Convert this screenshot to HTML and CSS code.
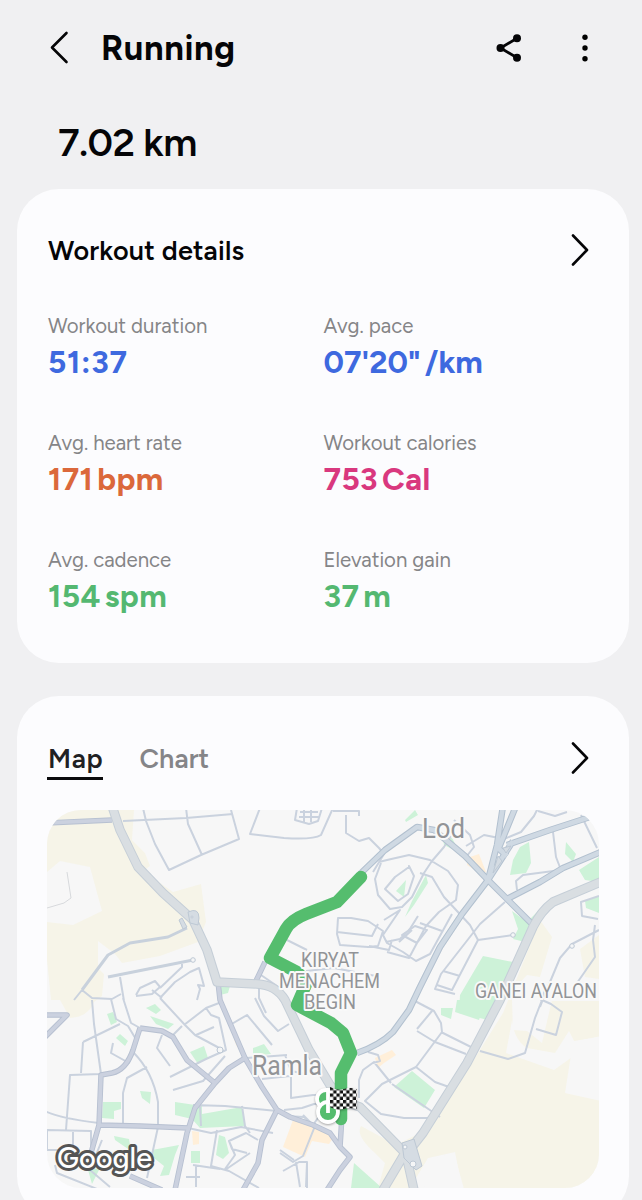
FILE: index.html
```html
<!DOCTYPE html>
<html lang="en">
<head>
<meta charset="utf-8">
<title>Running</title>
<link rel="stylesheet" href="styles.css">
</head>
<body>
<header class="topbar">
  <svg class="back" width="20" height="36" viewBox="0 0 20 36"><path d="M17.500 3 3 17.500l14.500 14.500"/></svg>
  <h1 class="title"><span>Running</span></h1>
  <svg class="share" width="32" height="32" viewBox="0 0 32 32"><path d="M24 6.2 7.5 16 24 25.8"/><circle cx="24" cy="6.2" r="4"/><circle cx="7.5" cy="16" r="4"/><circle cx="24" cy="25.8" r="4"/></svg>
  <svg class="more" width="8" height="32" viewBox="0 0 8 32"><circle cx="4" cy="5.3" r="2.7"/><circle cx="4" cy="16" r="2.7"/><circle cx="4" cy="26.7" r="2.7"/></svg>
</header>
<div class="distance">7.02 km</div>
<main class="cards">
  <section class="card details">
    <div class="card-head">
      <h2>Workout details</h2>
      <svg class="chevron" width="20" height="36" viewBox="0 0 20 36"><path d="m3 3.500 14 14.500L3 32.500"/></svg>
    </div>
    <dl class="stats">
      <div><dt>Workout duration</dt><dd class="blue time">51:37</dd></div>
      <div><dt>Avg. pace</dt><dd class="blue pace">07'20"<span class="unit">/km</span></dd></div>
      <div><dt>Avg. heart rate</dt><dd class="orange">171<span class="unit">bpm</span></dd></div>
      <div><dt>Workout calories</dt><dd class="pink">753<span class="unit">Cal</span></dd></div>
      <div><dt>Avg. cadence</dt><dd class="green">154<span class="unit">spm</span></dd></div>
      <div><dt>Elevation gain</dt><dd class="green">37<span class="unit">m</span></dd></div>
    </dl>
  </section>
  <section class="card map-card">
    <div class="card-head">
      <nav class="tabs"><span class="tab active">Map</span><span class="tab chart">Chart</span></nav>
      <svg class="chevron" width="20" height="36" viewBox="0 0 20 36"><path d="m3 3.500 14 14.500L3 32.500"/></svg>
    </div>
    <svg class="map" width="552" height="378" viewBox="47 810 552 378">
      <defs>
        <g id="highways">
          <path d="M112 806 120 830 138 867 163 893 193 920 207 950 217 982 257 984Q276 985 285 1000L309 1050 330 1085 345 1102 360 1107 405 1153 383 1190M405 1150 414 1190"/>
          <path d="M603 881 553 902Q541 911 533 927L500 1000 467 1063 423 1133 405 1156"/>
        </g>
        <g id="arterials">
          <path d="M503 806 497 845 488 880M516 806 498 850M590 817 550 830 507 845 M513 841 488 880 462 914 440 947 420 987 409 1010 393 1032Q380 1045 357 1053"/>
          <path d="M360 874 385 850 417 827 434 830 465 856 488 880 532 924M603 851 563 868 540 882 507 899M498 848l9 8"/>
        </g>
        <g id="streets">
          <path d="M45 1037 67 1015H45M140 1028 133 1050Q126 1070 112 1073L101 1075 99 1125 91 1153M140 1028 162 1031 173 1037 187 1060 215 1083M245 1058 229 1068 215 1083 195 1108 187 1133 175 1190M99 1125 140 1126 188 1128M218 982 220 1000 245 1058 262 1087 277 1110 290 1117 313 1125 330 1133 340 1147 350 1157 340 1170 327 1190M340 1147 342 1116M277 1110 262 1140 258 1163 243 1190M130 1176 162 1190M45 823 112 820M265 962 255 983"/>
        </g>
      </defs>
      <rect class="land" x="47" y="810" width="552" height="378"/>
      <g class="sand">
        <path d="M47 810H134L132 840 145 853 150 866 143 871 173 892 201 884 206 922 198 942 160 956 122 963 115 954 98 941V968L104 974 102 996 94 1002Q88 1017 70 1018L60 1000H51L47 960Z"/>
        <path d="M540 920 552 937 540 977 527 975 513 990V1015L506 1053 554 1070 599 1038V1188H462L455 1152 428 1158 410 1188H378L385 1163 375 1153Q355 1135 361 1126L396 1145 432 1127 503 1013Z"/>
        <path d="m512 1011 6-10h81v36l-25 4-5-10-14 22-28-5q-16-10-15-37ZM599 935l-19 14 5 28 14 2Z"/>
      </g>
      <g class="land">
        <path d="M47 872 60 861 90 867 102 911 73 925 47 922ZM512 1000h40l-10 43-15-12-14-1ZM573 1042l28-6v65l-36-8ZM428 1160l26-7 10 36h-40Z"/>
      </g>
      <g class="park">
        <path d="M483 956l30 6-8 38-13 21-33-8 1-18ZM520 847l9-5 2 21-5 10-16 2 3-15ZM566 842l10 12-3 8-8-8ZM579 870l20-13v25l-14-2ZM405 820l10-10 3 5-12 7ZM442 833l10 5 8 15-16-8ZM512 911l15 11 14-14-12 35-16-4 5-10ZM585 901l14-5v17l-13-5ZM426 875l2 8-14 22-9 12 7-16ZM396 891l10-11-2 17ZM220 987l10-1-2 7-8 2Z"/>
        <path d="M394 1087 412 1071 435 1090 424 1108ZM457 1000l29 0-7 20-24-8ZM441 1008h12l-2 11-10-4ZM354 1163l28 25h-31ZM107 1014l6-2 4 10-6 3ZM146 1008l9-4 6 6-5 4ZM150 1016l24 8-6 5-12-5ZM116 1038l4-4 8 7-3 5ZM190 1052l14-6 4 12-10 6ZM253 1048l11-4 7 10-18 2ZM140 1091l11 1-1 12-8-6ZM103 1102h18v7l-7 2v8l-12-1ZM175 1102l27 4v8l40-7 3 19-45 2-8-9-17-4ZM219 1135l6 2 4 16-6 6-7-4ZM114 1136l15 3 2 12-16-11ZM152 1150l27-5-4 10-6 20-9 1 4-10-10-8ZM191 1151h9v12h-9ZM88 1170l12-2-8 16Z"/>
      </g>
      <path class="peach" d="M467 858l12-4 7 18-5 2-14-9ZM375 1058l17-8 4 5-12 8-6 5ZM293 1120l23 6 19 9-6 9-17-3-7 16-22-10ZM192 1131l7 1v12l-6 1ZM234 1040l6 2-3 5Z"/>
      <g class="minor">
        <path d="M123 821 186 818 233 814M143 808 146 821 155 844 169 870 201 855 239 839 231 810M186 808 188 824 202 855M260 808l-10 26 34 4q29 2 37-3l12-27M333 811h26v5M346 815v18l13 8 10-3 10 10 5 6-11 18M297 808l-2 12 14 4 9-3 4-13M300 812h18M299 817h20M304 808v14M311 808v14"/>
        <path d="m379 862 8-2 22-5 21 5 18 11 10 14-2 15-17 12-13 14-17 32-22-6M381 863l-6 16 3 16 12 14 12-2 10-10 12-24 8-12 12-14 7-11M409 867l-14 10-10 12 13 12 10-7 6-18-5-10ZM338 918l-1 16 3 11 28 2 10-1 5-15-15-10-17-3ZM337 932l35 4 6-12M384 920l16-10-17 25 4 8 16 9 13 9 14-7 22-40M392 940l-3 10-20-4M402 935l13-9 12 4-10 13ZM386 942l14-3 10-10M287 940l20 10M306 971l28-3 42 8"/>
        <path d="M420 873l12 4 12 20 26 28 8 15 35-5M454 820l16 15 4 12-8 10M466 846l18-11 20 4 17-7 13-16 4-8M538 811l17 5 12-4M553 832l3 25 5 13-38 5-7 6 1 9M505 902l-25 22-39 50-6 15 20 5M478 940l-26 50-15-5M443 971l17 5M420 923l22 8M581 815l16 33M599 896l-18 6 1 14 16 3M599 930l-27 14-12 14-15 36-5 13M595 925l-2 15 2 17-18 26M412 930l-13 12M408 932l10-16"/>
        <path d="M82 990 74 1000M82 990 92 998 112 999 121 994M120 977 124 1001M136 995 140 988 155 981 160 987 152 994 136 996M160 988 182 967V964M160 998 175 982 190 972 199 968 204 986 198 985 200 989 197 1000M152 990 162 998M92 1000l2 24 7 50M111 999l5 20 12 7 9 15-8 22-18-10 2-10M83 1042 120 1024M83 1042 81 1073M101 1074 70 1075 66 1130M45 1111Q58 1118 99 1123M47 1130 91 1131V1150M47 1130v20h13M73 1131v18M123 998l8 25 9 5M160 998l25 27 10 10 28 15M184 1025l22-17 13-5M182 1026l-10 10M196 1035l18-8M206 1008l5 7 8 3 7 32-20 9-36 18M162 1035l-5 13 13 18M173 1090l30-9 22-25M133 1052q20 20 25 50v25l-11 51M147 1067l-20 11-4 15v33M193 1105l32 1 52 5M200 1106l1 20M242 1106l3 20 5 7M217 1130l-6 36 18 5 30 17M102 1140l-12 30 20 17M55 1165l2 8 70 28M188 1128l23 5 30-6 32 6M193 1165l27 4M247 1153l-15-4-3-8 17-8 12 7M229 1141l6 14-10 14M225 1170l25-17M196 1166v21M186 1177h14M284 1110l18-2 12-4h10M284 1116l20 1 9 8 7-10M291 1070v28l22-3 8 0M285 1055l6 16 15 3M230 1025l17-10 25 30M247 1058l40-3M262 1079l28-3M315 1126l-12 30-10 6-13-9M296 1162l4 25M307 1163l-1 24M283 1171l16-9h8v26M280 1150l14 10M313 1125l-10-10"/>
        <path d="M413 1000l21 11 7 12 1 9-26 35-34 17-17 17 16 13 23 4 24 0 18-18M417 1031l18 11 31 12M416 1067l19 15 14 5 2-2M392 1084 440 1117M391 1083 374 1062 363 1070 359 1080v18M368 1052l10 3 2 6-7 2M432 1011l-15 18M441 1032l30 15 3 11M480 1051l28 8 17-6 10-35 7-18 9 4 11 8-6 23-20-6M546 987l-5 14M255 998 264 1016 278 1031 289 1024M259 980V998L266 1013M258 973 283 990"/>
      </g>
      <path class="track" d="m67 872 4 26-7 5-17 5"/>
      <path class="lane" d="M187 928 168 937 130 943 108 955 82 990M108 977 193 960"/>
      <use class="street-case" href="#streets"/><use class="street-fill" href="#streets"/>
      <use class="art-case" href="#arterials"/><use class="art-fill" href="#arterials"/>
      <use class="high-case" href="#highways"/><use class="high-fill" href="#highways"/>
      <g class="junction"><path d="M188 912Q199 907 199 918L198 925 190 923ZM402 1143 414 1139 422 1166 416 1170 404 1158Z"/><circle cx="405" cy="1147" r="2"/><circle cx="413" cy="1164" r="3"/><circle cx="192" cy="917" r="1"/><path d="m179 920 3-2 5 9-4 2ZM498 856l4 5-9 12ZM503 848l8-2-5 7Z"/><circle cx="193" cy="960" r="2.3"/><circle cx="513" cy="935" r="2.3"/><circle cx="572" cy="946" r="2.3"/><circle cx="220" cy="1050" r="3"/></g>
      <path class="route" d="M361 877 337 902 306 914Q291 920 286 929L270 958 297 972 307 982 297 1005 331 1023 343 1033 351 1053 341 1073 341 1119"/>
      <g class="labels">
        <text x="422" y="838" font-size="27" textLength="43" lengthAdjust="spacingAndGlyphs">Lod</text>
        <text x="252" y="1075" font-size="27" textLength="70" lengthAdjust="spacingAndGlyphs">Ramla</text>
        <text x="301" y="967" font-size="20" textLength="58" lengthAdjust="spacingAndGlyphs">KIRYAT</text>
        <text x="279" y="988" font-size="20" textLength="101" lengthAdjust="spacingAndGlyphs">MENACHEM</text>
        <text x="304" y="1009" font-size="20" textLength="52" lengthAdjust="spacingAndGlyphs">BEGIN</text>
        <text x="475" y="998" font-size="20" textLength="122" lengthAdjust="spacingAndGlyphs">GANEI AYALON</text>
      </g>
      <g class="marker">
        <circle cx="326" cy="1099" r="9"/><circle cx="328" cy="1112" r="10"/><path d="M328 1088v25"/>
        <pattern id="checks" width="6.5" height="6.5" patternUnits="userSpaceOnUse" x="330" y="1087"><path class="white" d="M0 0h6.500v6.500H0Z"/><path class="black" d="M0 0h3.250v3.250H0ZM3.250 3.250h3.250v3.250H3.250Z"/></pattern>
        <path class="flag" d="M330 1087q7 4 14 2 6-2 12.500 0v20q-7-2-13 0-7 2-13.500-2Z" fill="url(#checks)"/>
      </g>
      <text class="google" x="57" y="1168" textLength="95" lengthAdjust="spacingAndGlyphs">Google</text>
    </svg>
  </section>
</main>
</body>
</html>
```

FILE: styles.css
```css
* { box-sizing: border-box; margin: 0; }
body { background: #f0f0f2; color: #050507; font-family: Figtree, Inter, sans-serif; height: 1200px; overflow: hidden; }
svg { display: block; flex: none; }
.topbar { display: flex; align-items: center; height: 95px; padding: 0 53px 0 49px; }
.back path, .chevron path { fill: none; stroke: #050507; stroke-width: 2.6; stroke-linecap: round; stroke-linejoin: round; }
.title { margin: 0 0 0 32px; font-size: 34.5px; line-height: 40px; font-weight: 750; letter-spacing: .6px; flex: 1; }
.share { margin-right: 56px; fill: #050507; }
.share path { fill: none; stroke: #050507; stroke-width: 2.8; }
.distance { height: 94px; padding: 22px 0 0 58px; font-size: 39.5px; line-height: 50px; font-weight: 620; letter-spacing: -.6px; }
.cards { display: flex; flex-direction: column; gap: 33px; padding: 0 13px 0 17px; }
.card { background: #fcfcfe; border-radius: 42px; }
.details { height: 474px; padding: 39px 39px 0 31px; }
.card-head { display: flex; align-items: center; justify-content: space-between; height: 44px; }
h2 { padding-top: 1px; font-size: 27px; line-height: 36px; font-weight: 620; letter-spacing: .2px; }
.stats { display: grid; grid-template-columns: 275.500px 1fr; grid-auto-rows: 117px; padding-top: 41px; }
dt { color: #858587; font-size: 20.4px; line-height: 26px; white-space: nowrap; }
dd { font-size: 31.5px; line-height: 38px; padding-top: 4px; font-weight: 680; letter-spacing: .4px; white-space: nowrap; }
.time { letter-spacing: .7px; }
.pace { letter-spacing: 0; }
.unit { margin-left: 4px; }
.blue { color: #3e69df; }
.orange { color: #db683b; }
.pink { color: #d9387e; }
.green { color: #54b871; }
.map-card { height: 522px; padding: 40px 39px 0 30px; }
.tabs { display: flex; gap: 35px; font-size: 27px; line-height: 36px; font-weight: 620; letter-spacing: .1px; }
.tab { padding: 4px 0 0 1px; color: #858588; border-bottom: 3px solid transparent; }
.active { color: #202023; border-color: #0b0b0d; letter-spacing: .7px; }
.map { margin-top: 30px; border-radius: 34px; }
.land { fill: #f7f7f7; }
.sand { fill: #f6f4e8; }
.park { fill: #cdf2d8; }
.peach { fill: #ffefd9; }
.minor { fill: none; stroke: #cad2de; stroke-width: 2; stroke-linejoin: round; }
.track { fill: none; stroke: #d7d9dc; stroke-width: 1; }
.lane { fill: none; stroke: #c8d1dc; stroke-width: 3; stroke-linejoin: round; }
.street-case, .street-fill, .art-case, .art-fill, .high-case, .high-fill { fill: none; stroke-linejoin: round; }
.street-case { stroke: #b7c0d1; stroke-width: 5.500; }
.street-fill { stroke: #cbd1df; stroke-width: 3.700; }
.art-case { stroke: #b2c0cf; stroke-width: 6.500; }
.art-fill { stroke: #cfd9e3; stroke-width: 4.500; }
.high-case { stroke: #c5ced7; stroke-width: 9.500; }
.high-fill { stroke: #d9dee2; stroke-width: 7.500; }
.junction { fill: #d5dce3; stroke: #bdc8d4; stroke-width: 1; }
.junction circle, .junction path + path { fill: #f5f6f7; }
.route { fill: none; stroke: #55bd6e; stroke-width: 12.500; stroke-linecap: round; stroke-linejoin: round; }
.labels { font-family: Roboto, sans-serif; fill: #929497; stroke: #f9f9f9; stroke-width: 4px; paint-order: stroke; stroke-linejoin: round; }
.marker { fill: #55bd6e; stroke: #fff; stroke-width: 3.800; filter: drop-shadow(0 1px 1px #0005); }
.marker .flag, .marker .white, .marker .black { stroke: none; }
.white { fill: #fff; }
.black { fill: #111; }
.google { font: 500 30px Figtree, Inter, sans-serif; fill: #fff; stroke: #555; stroke-width: 6px; paint-order: stroke; stroke-linejoin: round; }
```
